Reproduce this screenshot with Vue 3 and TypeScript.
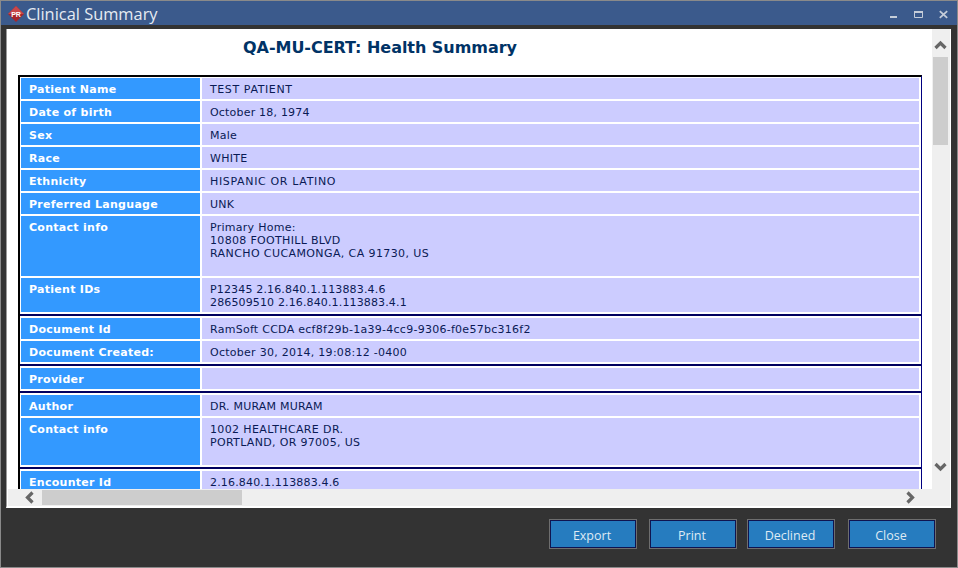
<script setup lang="ts">
interface Row {
  label: string
  lines: string[]
  tall?: number
}

const groups: Row[][] = [
  [
    { label: 'Patient Name', lines: ['TEST PATIENT'] },
    { label: 'Date of birth', lines: ['October 18, 1974'] },
    { label: 'Sex', lines: ['Male'] },
    { label: 'Race', lines: ['WHITE'] },
    { label: 'Ethnicity', lines: ['HISPANIC OR LATINO'] },
    { label: 'Preferred Language', lines: ['UNK'] },
    { label: 'Contact info', lines: ['Primary Home:', '10808 FOOTHILL BLVD', 'RANCHO CUCAMONGA, CA 91730, US'], tall: 60 },
    { label: 'Patient IDs', lines: ['P12345 2.16.840.1.113883.4.6', '286509510 2.16.840.1.113883.4.1'], tall: 34 },
  ],
  [
    { label: 'Document Id', lines: ['RamSoft CCDA ecf8f29b-1a39-4cc9-9306-f0e57bc316f2'] },
    { label: 'Document Created:', lines: ['October 30, 2014, 19:08:12 -0400'] },
  ],
  [{ label: 'Provider', lines: [''] }],
  [
    { label: 'Author', lines: ['DR. MURAM MURAM'] },
    { label: 'Contact info', lines: ['1002 HEALTHCARE DR.', 'PORTLAND, OR 97005, US'], tall: 47 },
  ],
  [{ label: 'Encounter Id', lines: ['2.16.840.1.113883.4.6'] }],
]

// the reference font runs caps wide and digits narrow, so some lines get their own tracking
const tracking: Record<string, number> = {
  'TEST PATIENT': 0.6,
  'HISPANIC OR LATINO': 0.66,
  'RANCHO CUCAMONGA, CA 91730, US': 0.4,
  'P12345 2.16.840.1.113883.4.6': 0.16,
  '286509510 2.16.840.1.113883.4.1': 0.14,
  '2.16.840.1.113883.4.6': 0.17,
  'DR. MURAM MURAM': 0.2,
  '1002 HEALTHCARE DR.': 0.37,
  'PORTLAND, OR 97005, US': 0.32,
  '10808 FOOTHILL BLVD': 0.32,
  'October 18, 1974': 0.2,
}

const lineStyle = (line: string) =>
  tracking[line] !== undefined ? { letterSpacing: tracking[line] + 'px' } : undefined

const buttons = ['Export', 'Print', 'Declined', 'Close']
</script>

<template>
  <div class="window">
    <header class="titlebar">
      <svg class="logo" width="16" height="16" viewBox="0 0 16 16">
        <path d="M8 0 16 8 8 16 0 8Z" fill="#a8252b" />
        <path d="M8 0 16 8H0Z" fill="#c9474a" />
        <text x="8" y="10.5" text-anchor="middle" class="logo-text">PR</text>
      </svg>
      <span class="title">Clinical Summary</span>
      <div class="controls">
        <svg width="10" height="12" viewBox="0 0 10 12"><rect x="1" y="9" width="7" height="2" fill="#c5cdd9" /></svg>
        <svg width="10" height="12" viewBox="0 0 10 12"><path d="M.5 4.5h8v6h-8z" fill="none" stroke="#c5cdd9" /><rect x="0" y="4" width="9" height="2" fill="#c5cdd9" /></svg>
        <svg width="10" height="12" viewBox="0 0 10 12"><path d="M.8 4.2 8.2 10.800M8.2 4.2 .8 10.800" stroke="#c5cdd9" stroke-width="1.8" /></svg>
      </div>
    </header>

    <main class="body">
      <div class="frame">
        <div class="viewport">
          <h1 class="heading">QA-MU-CERT: Health Summary</h1>
          <div class="tables">
            <div v-for="(group, g) in groups" :key="g" class="group">
              <div v-for="row in group" :key="row.label" class="row" :style="row.tall ? { height: row.tall + 'px' } : undefined">
                <div class="label">{{ row.label }}</div>
                <div class="value">
                  <div v-for="(line, i) in row.lines" :key="i" :style="lineStyle(line)">{{ line }}</div>
                </div>
              </div>
            </div>
          </div>
        </div>
        <div class="vscroll">
          <svg class="arrow-up" width="17" height="17" viewBox="0 0 17 17"><path d="M3.5 12 8.5 7 13.5 12" fill="none" stroke="#666" stroke-width="3.2" /></svg>
          <div class="vthumb"></div>
          <div class="spacer"></div>
          <svg class="arrow-down" width="17" height="17" viewBox="0 0 17 17"><path d="M3.5 5 8.5 10 13.5 5" fill="none" stroke="#666" stroke-width="3.2" /></svg>
        </div>
        <div class="hscroll">
          <svg width="17" height="17" viewBox="0 0 17 17"><path d="M11.5 3.500 6.500 8.500 11.5 13.500" fill="none" stroke="#666" stroke-width="3.2" /></svg>
          <div class="hthumb"></div>
          <div class="spacer"></div>
          <svg width="17" height="17" viewBox="0 0 17 17"><path d="M5.500 3.500 10.500 8.500 5.500 13.500" fill="none" stroke="#666" stroke-width="3.2" /></svg>
        </div>
        <div class="corner"></div>
      </div>
    </main>

    <footer class="footer">
      <button v-for="b in buttons" :key="b" class="btn" type="button">{{ b }}</button>
    </footer>
  </div>
</template>

<style>
html, body {
  margin: 0;
  background: #333;
}
</style>

<style scoped>
.window {
  width: 958px;
  height: 568px;
  box-sizing: border-box;
  border: 1px solid #8a8a8a;
  background: #333;
  display: flex;
  flex-direction: column;
  overflow: hidden;
}
.titlebar {
  height: 24px;
  flex: none;
  background: #3b5a8c;
  display: flex;
  align-items: center;
  padding: 0 8px 0 7px;
  color: #e6ebf2;
}
.logo {
  flex: none;
  margin-top: 2px;
}
.logo-text {
  font: bold 7px "Liberation Sans", sans-serif;
  fill: #fff;
}
.title {
  margin-left: 2px;
  font: 16.4px "Open Sans", sans-serif;
}
.controls {
  margin-left: auto;
  display: flex;
  gap: 15px;
}
.body {
  flex: 1;
  min-height: 0;
  padding: 4px 6px 0 5px;
}
.frame {
  height: 479px;
  box-sizing: border-box;
  border-left: 1px solid #9a9a9a;
  border-right: 1px solid #fff;
  border-bottom: 2px solid #fff;
  padding-left: 1px;
  background: #fff;
  display: grid;
  grid-template-columns: 1fr 18px;
  grid-template-rows: 1fr 17px;
}
.viewport {
  overflow: hidden;
  padding: 0 10px;
  background: #fff;
}
.heading {
  margin: 0;
  padding: 9px 0 0 225px;
  height: 37px;
  box-sizing: border-box;
  font: bold 16px "DejaVu Sans", Verdana, sans-serif;
  letter-spacing: -.04px;
  color: #003366;
  white-space: nowrap;
}
.tables {
  margin-top: 9px;
  width: 904px;
  box-sizing: border-box;
  border-top: 2px solid #000;
  border-left: 2px solid #000;
  border-right: 1px solid #000080;
}
.group {
  padding: 2px 2px 2px 1px;
  display: flex;
  flex-direction: column;
  gap: 2px;
  border-bottom: 2px solid #000060;
}
.group:first-child {
  padding-top: 1px;
}
.row {
  display: flex;
  height: 21px;
  gap: 2px;
  font: 11px/13px "DejaVu Sans", Verdana, sans-serif;
}
.label {
  width: 179px;
  flex: none;
  box-sizing: border-box;
  padding: 5px 8px 0;
  background: #3399ff;
  color: #fff;
  font-weight: bold;
  letter-spacing: .28px;
  white-space: nowrap;
}
.value {
  flex: 1;
  box-sizing: border-box;
  padding: 5px 8px 0;
  background: #ccccff;
  color: #0a1a55;
  letter-spacing: .27px;
}
.vscroll {
  background: #efefef;
  display: flex;
  flex-direction: column;
}
.arrow-up {
  margin-top: 7px;
  flex: none;
}
.arrow-down {
  margin-bottom: 13px;
  flex: none;
}
.vthumb {
  height: 88px;
  flex: none;
  margin: 4px 2px 0 1px;
  background: #cdcdcd;
}
.hscroll {
  background: #efefef;
  display: flex;
  align-items: stretch;
  padding: 0 13px;
}
.hthumb {
  width: 200px;
  margin: 1px 0 1px 4px;
  background: #cdcdcd;
}
.spacer {
  flex: 1;
}
.corner {
  background: #efefef;
}
.footer {
  flex: none;
  height: 59px;
  display: flex;
  justify-content: flex-end;
  align-items: flex-start;
  padding: 11px 21px 0 0;
  box-sizing: border-box;
}
.btn {
  width: 88px;
  height: 30px;
  box-sizing: border-box;
  background: #267cbf;
  border: 1px solid #6e6e6e;
  box-shadow: inset 0 0 0 1px #0f1450;
  color: #dfeaf4;
  font: 12.5px "Open Sans", sans-serif;
  padding: 2px 2px 0 0;
  margin-left: 12px;
}
.btn:nth-child(1) {
  margin-left: 0;
}
.btn:nth-child(3) {
  margin-left: 10px;
}
.btn:nth-child(4) {
  margin-left: 13px;
}
</style>
